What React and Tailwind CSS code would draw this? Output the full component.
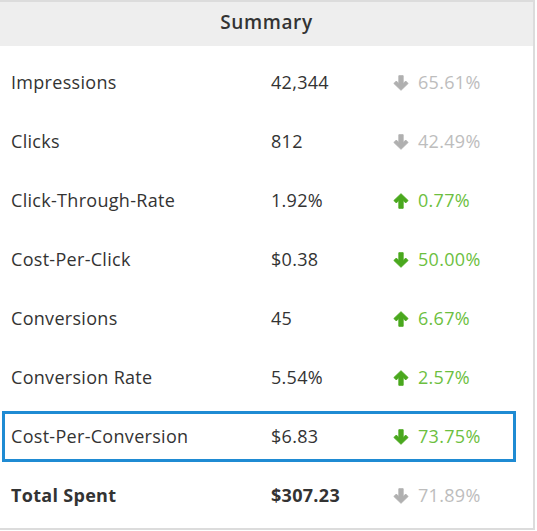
import React from 'react';

const rows = [
  { label: 'Impressions', value: '42,344', dir: 'down', change: '65.61%', tone: 'gray' },
  { label: 'Clicks', value: '812', dir: 'down', change: '42.49%', tone: 'gray' },
  { label: 'Click-Through-Rate', value: '1.92%', dir: 'up', change: '0.77%', tone: 'green' },
  { label: 'Cost-Per-Click', value: '$0.38', dir: 'down', change: '50.00%', tone: 'green' },
  { label: 'Conversions', value: '45', dir: 'up', change: '6.67%', tone: 'green' },
  { label: 'Conversion Rate', value: '5.54%', dir: 'up', change: '2.57%', tone: 'green' },
  { label: 'Cost-Per-Conversion', value: '$6.83', dir: 'down', change: '73.75%', tone: 'green', highlight: true },
  { label: 'Total Spent', value: '$307.23', dir: 'down', change: '71.89%', tone: 'gray', bold: true },
];

// thick font-awesome style arrow, rotated for "up"
const Arrow = ({ dir, className = '' }) => (
  <svg viewBox="0 0 14 14" className={`w-[16px] h-[16px] ${dir === 'up' ? 'rotate-180' : ''} ${className}`}>
    <path
      d="M7 13.4 L0.8 7.4 L2.9 5.3 L5.1 7.5 V0.6 H8.9 V7.5 L11.1 5.3 L13.2 7.4 Z"
      fill="currentColor"
      stroke="currentColor"
      strokeWidth="0.8"
      strokeLinejoin="round"
    />
  </svg>
);

const Row = ({ row }) => {
  const arrowColor = row.tone === 'green' ? 'text-[#4aa81e]' : 'text-[#b0b0b0]';
  const textColor = row.tone === 'green' ? 'text-[#6dbf3f]' : 'text-[#bdbdbd]';
  return (
    <div className="h-[59px] py-[4px] pl-[2px]">
      <div
        className={`h-full w-[514px] border-[3px] pl-[6px] grid grid-cols-[260px_123px_1fr] items-center ${
          row.highlight ? 'border-[#1f8bd3]' : 'border-transparent'
        }`}
      >
        <span className={`text-[#333] ${row.bold ? 'font-bold' : ''}`}>{row.label}</span>
        <span className={`text-[#333] ${row.bold ? 'font-bold' : ''}`}>{row.value}</span>
        <span className="flex items-center gap-[9px] -ml-[1px]">
          <Arrow dir={row.dir} className={arrowColor} />
          <span className={textColor}>{row.change}</span>
        </span>
      </div>
    </div>
  );
};

export default function App() {
  return (
    <div className="w-[535px] bg-white border-t-2 border-r-2 border-b-2 border-[#dcdcdc] font-['Open_Sans',sans-serif] text-[18px] tracking-[0.3px]">
      <div className="h-[44px] bg-[#eeeeee] flex items-center justify-center">
        <h2 className="text-[19px] font-semibold text-[#333] tracking-[0.6px] -mt-[3px]">Summary</h2>
      </div>
      <div className="pt-[7px] pb-[3px]">
        {rows.map((row) => (
          <Row key={row.label} row={row} />
        ))}
      </div>
    </div>
  );
}
